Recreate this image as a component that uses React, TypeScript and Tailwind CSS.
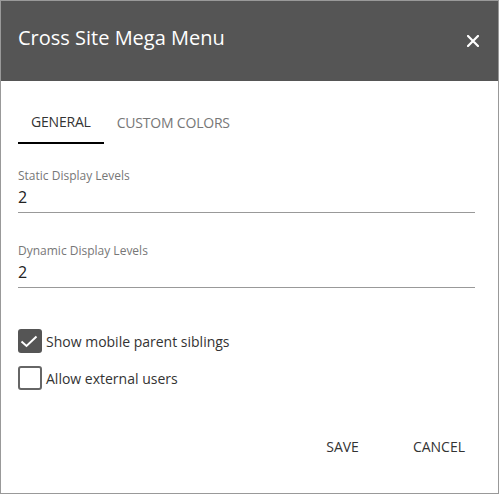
export default function App() {
  return (
    <div className="w-[499px] h-[494px] border border-[#999] bg-white flex flex-col font-['Open_Sans',sans-serif]">
      {/* Header */}
      <div className="h-[80px] bg-[#555] flex items-center justify-between pl-[17px] pr-[19px]">
        <h1 className="text-[20px] leading-[28px] text-white mb-[6px]">Cross Site Mega Menu</h1>
        <button className="text-white">
          <svg width="12" height="12" viewBox="0 0 12 12" className="block">
            <path d="M1 1 L11 11 M11 1 L1 11" stroke="white" strokeWidth="2.2" strokeLinecap="square" />
          </svg>
        </button>
      </div>

      <div className="px-[17px] pt-[19px] flex flex-col">
        {/* Tabs */}
        <div className="flex">
          <div className="h-[44px] px-[13px] flex items-center border-b-2 border-black text-[14px] tracking-[-0.2px] text-[#333]">
            GENERAL
          </div>
          <div className="h-[44px] px-[13px] flex items-center text-[14px] tracking-[-0.2px] text-[#777]">
            CUSTOM COLORS
          </div>
        </div>

        {/* Fields */}
        <div className="mt-[24px] mr-[6px] border-b border-[#999] pb-[3px]">
          <div className="text-[12px] leading-[16px] text-[#777]">Static Display Levels</div>
          <div className="mt-[1px] text-[16px] leading-[24px] text-[#222]">2</div>
        </div>
        <div className="mt-[30px] mr-[6px] border-b border-[#999] pb-[3px]">
          <div className="text-[12px] leading-[16px] text-[#777]">Dynamic Display Levels</div>
          <div className="mt-[1px] text-[16px] leading-[24px] text-[#222]">2</div>
        </div>

        {/* Checkboxes */}
        <label className="mt-[41px] flex items-center">
          <span className="w-[24px] h-[24px] rounded-[3px] bg-[#555] flex items-center justify-center">
            <svg width="24" height="24" viewBox="0 0 24 24">
              <path d="M3.5 12.5 L8.5 17 L18.5 7.5" fill="none" stroke="white" strokeWidth="2" />
            </svg>
          </span>
          <span className="ml-[4px] text-[14px] text-[#333]">Show mobile parent siblings</span>
        </label>
        <label className="mt-[13px] flex items-center">
          <span className="w-[24px] h-[24px] rounded-[3px] border-2 border-[#666]" />
          <span className="ml-[4px] text-[14px] text-[#333]">Allow external users</span>
        </label>

        {/* Actions */}
        <div className="mt-[38px] flex justify-end gap-[22px]">
          <button className="h-[36px] px-4 text-[14px] text-[#333]">SAVE</button>
          <button className="h-[36px] px-4 text-[14px] text-[#333]">CANCEL</button>
        </div>
      </div>
    </div>
  );
}
